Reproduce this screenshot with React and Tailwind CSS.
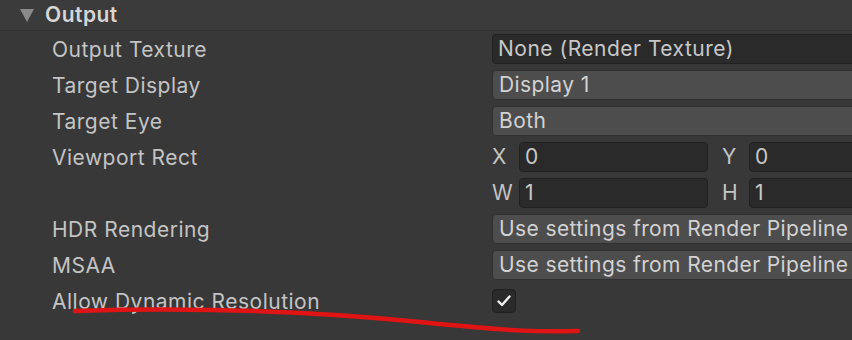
import React from 'react';

const font = { fontFamily: 'Inter, "Noto Sans", sans-serif' };

const Row = ({ label, children }) => (
  <div className="flex h-[36px] items-center">
    <div className="w-[492px] shrink-0 pl-[52px] text-[21px] tracking-[0.5px] text-[#c4c4c4] leading-none">{label}</div>
    <div className="flex-1 flex items-center">{children}</div>
  </div>
);

const ObjectField = ({ value }) => (
  <div className="h-[30px] w-[420px] rounded-[4px] border border-[#212121] bg-[#2a2a2a] pl-[5px] flex items-center text-[21px] tracking-[0.5px] text-[#c8c8c8]">
    {value}
  </div>
);

const Dropdown = ({ value }) => (
  <div className="h-[30px] w-[420px] rounded-[4px] border border-[#303030] bg-[#4d4d4d] pl-[6px] flex items-center text-[21px] tracking-[0.4px] text-[#d2d2d2]">
    {value}
  </div>
);

const NumField = ({ label, value, last }) => (
  <div className={'flex items-center ' + (last ? 'flex-1' : 'w-[230px]')}>
    <span className="w-[27px] shrink-0 text-[21px] text-[#c4c4c4]">{label}</span>
    <div className={'h-[30px] rounded-[4px] border border-[#212121] bg-[#2a2a2a] pl-[5px] flex items-center text-[21px] text-[#c8c8c8] ' + (last ? 'w-[200px]' : 'w-[189px]')}>
      {value}
    </div>
  </div>
);

export default function App() {
  return (
    <div className="relative w-[852px] h-[340px] overflow-hidden bg-[#383838]" style={font}>
      <div className="h-[31px] flex items-center bg-[#3b3b3b] border-b border-[#303030]">
        <svg width="14" height="13" viewBox="0 0 14 13" className="ml-[20px]">
          <polygon points="0,0 14,0 7,13" fill="#8a8a8a" />
        </svg>
        <span className="ml-[11px] text-[21px] tracking-[0.5px] font-semibold text-[#d6d6d6]">Output</span>
      </div>
      <div className="w-[900px]">
        <Row label="Output Texture"><ObjectField value="None (Render Texture)" /></Row>
        <Row label="Target Display"><Dropdown value="Display 1" /></Row>
        <Row label="Target Eye"><Dropdown value="Both" /></Row>
        <Row label="Viewport Rect">
          <NumField label="X" value="0" />
          <NumField label="Y" value="0" last />
        </Row>
        <Row label="">
          <NumField label="W" value="1" />
          <NumField label="H" value="1" last />
        </Row>
        <Row label="HDR Rendering"><Dropdown value="Use settings from Render Pipeline" /></Row>
        <Row label="MSAA"><Dropdown value="Use settings from Render Pipeline" /></Row>
        <Row label="Allow Dynamic Resolution">
          <div className="h-[24px] w-[24px] rounded-[4px] border border-[#212121] bg-[#2a2a2a] flex items-center justify-center">
            <svg width="14" height="12" viewBox="0 0 14 12">
              <path d="M1.5 6.5 L5 10 L12.5 1.5" fill="none" stroke="#f0f0f0" strokeWidth="2.4" strokeLinecap="round" strokeLinejoin="round" />
            </svg>
          </div>
        </Row>
      </div>
      <svg className="absolute left-0 top-0 pointer-events-none" width="852" height="340" viewBox="0 0 852 340">
        <path d="M75 311 C 200 307, 320 312, 420 322 S 540 332, 578 331" fill="none" stroke="#e01414" strokeWidth="4.5" strokeLinecap="round" />
      </svg>
    </div>
  );
}
